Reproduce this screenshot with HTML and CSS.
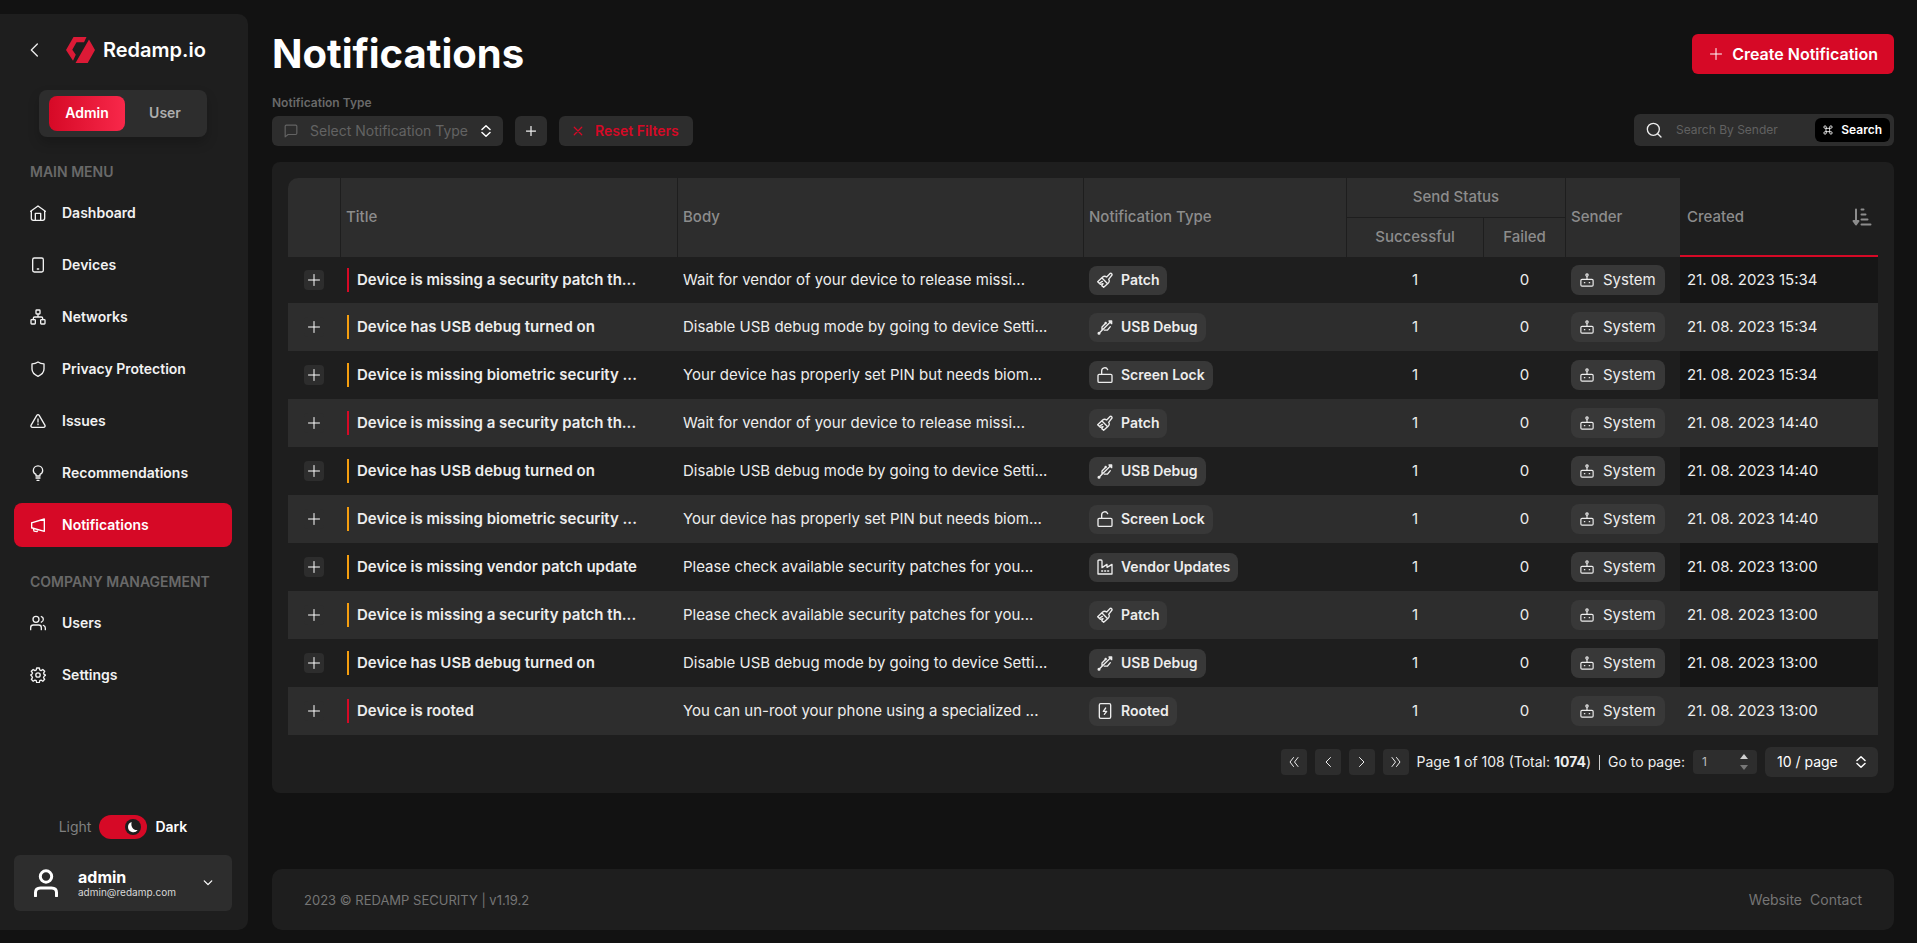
FILE: index.html
```html
<!DOCTYPE html>
<html lang="en">
<head>
<meta charset="utf-8">
<meta name="viewport" content="width=device-width, initial-scale=1">
<title>Notifications</title>
<link rel="stylesheet" href="styles.css">
</head>
<body>
<svg class="sprite" aria-hidden="true">
  <symbol id="i-home" viewBox="0 0 24 24"><path d="M1 9.500L12 1.500l11 8M2 9v11a3 3 0 0 0 3 3h14a3 3 0 0 0 3-3V9M8 23V12.500h8V23"/></symbol>
  <symbol id="i-device" viewBox="0 0 24 24"><rect x="4" y="1.500" width="16" height="21" rx="2.500"/><path d="M11 18h2"/></symbol>
  <symbol id="i-network" viewBox="0 0 24 24"><rect x="9" y="1.500" width="6" height="6" rx="1"/><rect x="1.500" y="16" width="6.500" height="6.500" rx="1"/><rect x="16" y="16" width="6.500" height="6.500" rx="1"/><path d="M5 16v-2a2 2 0 0 1 2-2h10a2 2 0 0 1 2 2v2M12 8v4"/></symbol>
  <symbol id="i-shield" viewBox="0 0 24 24"><path d="M12 1.500c2.500 1.700 5.500 2.700 9 2.800V12c0 5-3.500 8.500-9 11-5.500-2.500-9-6-9-11V4.300c3.500-.1 6.500-1.100 9-2.800z"/></symbol>
  <symbol id="i-warn" viewBox="0 0 24 24"><path d="M12 2.500c.8 0 1.400.4 1.800 1l8.500 14.700c.9 1.600-.1 3.300-1.800 3.300h-17c-1.700 0-2.700-1.700-1.800-3.300L10.200 3.500c.4-.6 1-1 1.800-1zM12 9v4.500M12 16.500v1"/></symbol>
  <symbol id="i-bulb" viewBox="0 0 24 24"><path d="M9 16.500v-2.300C6.800 13.200 5 11 5 8.300a7 7 0 0 1 14 0c0 2.700-1.800 4.900-4 5.900v2.300zM9 19.500h6M10.500 23h3"/></symbol>
  <symbol id="i-horn" viewBox="0 0 24 24"><path d="M21.500 3v18.500L3.500 16.500h-1v-8h1zM5 17l1 4.200 4.500.8 1.500-3"/></symbol>
  <symbol id="i-users" viewBox="0 0 24 24"><circle cx="9" cy="6.500" r="4.500"/><path d="M1 22v-3c0-2.500 1.800-4 4-4h8c2.200 0 4 1.500 4 4v3M17 2.300c3.500 1 4.500 6.500 0 8.500M20 15.500c2 .5 3 2 3 4V22"/></symbol>
  <symbol id="i-gear" viewBox="0 0 24 24"><circle cx="12" cy="12" r="3.300"/><path d="M10 1.500h4l.6 3 2 .9 2.600-1.700 2.800 2.800-1.700 2.600.9 2 2.300.9v.2l-2.300 1.700-.9 2 1.700 2.600-2.800 2.800-2.600-1.700-2 .9-.6 3h-4l-.6-3-2-.9-2.600 1.700L2 18.500l1.700-2.600-.9-2-1.600-1.700v-.4l1.600-.9.9-2L2 6.500l2.800-2.800 2.600 1.700 2-.9z"/></symbol>
  <symbol id="i-plus" viewBox="0 0 24 24"><path d="M12 1v22M1 12h22"/></symbol>
  <symbol id="i-x" viewBox="0 0 24 24"><path d="M3 3l18 18M21 3L3 21"/></symbol>
  <symbol id="i-left" viewBox="0 0 24 24"><path d="M17 3L8 12l9 9"/></symbol>
  <symbol id="i-right" viewBox="0 0 24 24"><path d="M7 3l9 9-9 9"/></symbol>
  <symbol id="i-first" viewBox="0 0 24 24"><path d="M11 3L4 12l7 9M20 3l-7 9 7 9"/></symbol>
  <symbol id="i-last" viewBox="0 0 24 24"><path d="M13 3l7 9-7 9M4 3l7 9-7 9"/></symbol>
  <symbol id="i-down" viewBox="0 0 24 24"><path d="M3 7l9 9 9-9"/></symbol>
  <symbol id="i-updown" viewBox="0 0 10 12"><path d="M1 4.500L5 .8l4 3.700M1 7.500l4 3.700 4-3.700"/></symbol>
  <symbol id="i-chat" viewBox="0 0 24 24"><path d="M2 22V4a2 2 0 0 1 2-2h16a2 2 0 0 1 2 2v12a2 2 0 0 1-2 2H7z"/></symbol>
  <symbol id="i-search" viewBox="0 0 24 24"><circle cx="11" cy="11" r="9"/><path d="M17.500 17.500L22.500 22.500"/></symbol>
  <symbol id="i-cmd" viewBox="0 0 24 24"><path d="M8 8h8v8H8zM8 8H5a3 3 0 1 1 3-3zM16 8V5a3 3 0 1 1 3 3zM16 16h3a3 3 0 1 1-3 3zM8 16v3a3 3 0 1 1-3-3z"/></symbol>
  <symbol id="i-sort" viewBox="0 0 20 18"><path d="M4 1.500v13M1.500 13L4 16.500 6.500 13zM9.500 1.500h2M9.500 6.500h4M9.500 11.500h6M9.500 16.500h9"/></symbol>
  <symbol id="i-patch" viewBox="0 0 24 24"><path d="M14.500 7.500L20 2a2 2 0 0 1 2.500 2.500L17.500 11c1.500 2 1 4-.8 5.800L10 23l-2.800-2.500L9 17.500l-4 1L1 14.500l7.500-7c2-1.700 4-1.500 6 0zM7.500 9l8.500 8.500M4 16.500l4-2.500"/></symbol>
  <symbol id="i-usb" viewBox="0 0 24 24"><path d="M3 21.500L20 4.500M7.500 16.500V12L13 6.500M11 16.800h4.500l4.500-5.300"/><circle cx="3" cy="21.500" r="1.300"/><circle cx="13" cy="6" r=".8"/><path d="M18 3h4v4z"/></symbol>
  <symbol id="i-lock" viewBox="0 0 24 24"><rect x="1.500" y="11" width="21" height="12" rx="1.800"/><path d="M7 11V6a4.700 4.700 0 0 1 9-2"/></symbol>
  <symbol id="i-factory" viewBox="0 0 24 24"><path d="M1.500 22.500V3A1.500 1.500 0 0 1 3 1.500h3A1.500 1.500 0 0 1 7.500 3v10L15 8v4.500L22.500 8v14.500zM7 18h1.500M11.500 18H13M16 18h1.500"/></symbol>
  <symbol id="i-rooted" viewBox="0 0 24 24"><rect x="3.500" y="1" width="17" height="22" rx="2"/><path d="M13 7.500l-3.500 5h5L11 17"/></symbol>
  <symbol id="i-bot" viewBox="0 0 24 24"><rect x="1.500" y="11" width="21" height="11.500" rx="2"/><circle cx="12" cy="3.500" r="2"/><path d="M12 5.500V11M7.500 16.500h.8M15.800 16.500h.8"/></symbol>
  <symbol id="i-user" viewBox="0 0 24 28"><circle cx="12" cy="7.500" r="5.700"/><path d="M1.500 27v-3.500C1.500 20.500 3.500 19 6.500 19h11c3 0 5 1.500 5 4.500V27"/></symbol>
</svg>

<div class="app">
  <aside class="sidebar">
    <div class="brand">
      <button class="back" type="button" aria-label="Collapse menu"><svg class="icon"><use href="#i-left"/></svg></button>
      <a class="logo" href="#">
        <svg viewBox="0 0 29 26" aria-hidden="true"><path d="M7.500 0h13L18 5.300h-7.500L6.300 12.800l3.500 5L7 23.800 0 13zM23 2.500L29 13l-7.300 13H9.500z"/></svg>
        <span>Redamp.io</span>
      </a>
    </div>
    <div class="role-switch">
      <button class="role role-active" type="button">Admin</button>
      <button class="role" type="button">User</button>
    </div>
    <nav class="nav">
      <h2 class="nav-title">MAIN MENU</h2>
      <a class="nav-item" href="#"><svg class="icon"><use href="#i-home"/></svg>Dashboard</a>
      <a class="nav-item" href="#"><svg class="icon"><use href="#i-device"/></svg>Devices</a>
      <a class="nav-item" href="#"><svg class="icon"><use href="#i-network"/></svg>Networks</a>
      <a class="nav-item" href="#"><svg class="icon"><use href="#i-shield"/></svg>Privacy Protection</a>
      <a class="nav-item" href="#"><svg class="icon"><use href="#i-warn"/></svg>Issues</a>
      <a class="nav-item" href="#"><svg class="icon"><use href="#i-bulb"/></svg>Recommendations</a>
      <a class="nav-item nav-current" href="#" aria-current="page"><svg class="icon"><use href="#i-horn"/></svg>Notifications</a>
      <h2 class="nav-title">COMPANY MANAGEMENT</h2>
      <a class="nav-item" href="#"><svg class="icon"><use href="#i-users"/></svg>Users</a>
      <a class="nav-item" href="#"><svg class="icon"><use href="#i-gear"/></svg>Settings</a>
    </nav>
    <div class="theme">
      <label for="theme">Light</label>
      <span class="switch">
        <input id="theme" type="checkbox" role="switch" checked>
        <svg class="moon" viewBox="0 0 24 24" aria-hidden="true"><circle cx="12" cy="12" r="12"/><path d="M10 4.500C6.500 5.500 4.500 8.500 4.500 12a8 8 0 0 0 14.500 4.500C13 17.500 8 12 10 4.500z"/></svg>
      </span>
      <label class="theme-on" for="theme">Dark</label>
    </div>
    <button class="account" type="button">
      <svg class="icon account-icon"><use href="#i-user"/></svg>
      <span class="account-text"><strong>admin</strong><small>admin@redamp.com</small></span>
      <svg class="icon account-arrow"><use href="#i-down"/></svg>
    </button>
  </aside>

  <main class="main">
    <header class="page-head">
      <h1>Notifications</h1>
      <button class="create" type="button"><svg class="icon"><use href="#i-plus"/></svg>Create Notification</button>
    </header>

    <div class="toolbar">
      <div class="filter">
        <label for="type">Notification Type</label>
        <div class="select-box type-box">
          <svg class="icon chat"><use href="#i-chat"/></svg>
          <select id="type"><option>Select Notification Type</option></select>
          <svg class="updown"><use href="#i-updown"/></svg>
        </div>
      </div>
      <button class="add" type="button" aria-label="Add filter"><svg class="icon"><use href="#i-plus"/></svg></button>
      <button class="reset" type="button"><svg class="icon"><use href="#i-x"/></svg>Reset Filters</button>
      <form class="search">
        <svg class="icon"><use href="#i-search"/></svg>
        <input type="text" placeholder="Search By Sender" aria-label="Search By Sender">
        <button type="button"><svg class="icon"><use href="#i-cmd"/></svg>Search</button>
      </form>
    </div>

    <section class="card">
      <table>
        <colgroup><col class="c-open"><col class="c-title"><col><col class="c-type"><col class="c-ok"><col class="c-fail"><col class="c-sender"><col class="c-date"></colgroup>
        <thead>
          <tr>
            <th rowspan="2" class="first"></th>
            <th rowspan="2">Title</th>
            <th rowspan="2">Body</th>
            <th rowspan="2">Notification Type</th>
            <th colspan="2" class="mid group">Send Status</th>
            <th rowspan="2" class="flat">Sender</th>
            <th rowspan="2" class="sorted"><div><span>Created</span><svg class="sort"><use href="#i-sort"/></svg></div></th>
          </tr>
          <tr><th class="mid">Successful</th><th class="mid">Failed</th></tr>
        </thead>
        <tbody>
          <tr><td class="mid"><button class="open" type="button" aria-label="Expand"><svg class="icon"><use href="#i-plus"/></svg></button></td><td><span class="title high">Device is missing a security patch th...</span></td><td>Wait for vendor of your device to release missi...</td><td><span class="tag"><svg class="icon"><use href="#i-patch"/></svg>Patch</span></td><td class="mid">1</td><td class="mid">0</td><td><span class="tag sender"><svg class="icon"><use href="#i-bot"/></svg>System</span></td><td class="date">21. 08. 2023 15:34</td></tr>
          <tr><td class="mid"><button class="open" type="button" aria-label="Expand"><svg class="icon"><use href="#i-plus"/></svg></button></td><td><span class="title">Device has USB debug turned on</span></td><td>Disable USB debug mode by going to device Setti...</td><td><span class="tag"><svg class="icon"><use href="#i-usb"/></svg>USB Debug</span></td><td class="mid">1</td><td class="mid">0</td><td><span class="tag sender"><svg class="icon"><use href="#i-bot"/></svg>System</span></td><td class="date">21. 08. 2023 15:34</td></tr>
          <tr><td class="mid"><button class="open" type="button" aria-label="Expand"><svg class="icon"><use href="#i-plus"/></svg></button></td><td><span class="title">Device is missing biometric security ...</span></td><td>Your device has properly set PIN but needs biom...</td><td><span class="tag"><svg class="icon"><use href="#i-lock"/></svg>Screen Lock</span></td><td class="mid">1</td><td class="mid">0</td><td><span class="tag sender"><svg class="icon"><use href="#i-bot"/></svg>System</span></td><td class="date">21. 08. 2023 15:34</td></tr>
          <tr><td class="mid"><button class="open" type="button" aria-label="Expand"><svg class="icon"><use href="#i-plus"/></svg></button></td><td><span class="title high">Device is missing a security patch th...</span></td><td>Wait for vendor of your device to release missi...</td><td><span class="tag"><svg class="icon"><use href="#i-patch"/></svg>Patch</span></td><td class="mid">1</td><td class="mid">0</td><td><span class="tag sender"><svg class="icon"><use href="#i-bot"/></svg>System</span></td><td class="date">21. 08. 2023 14:40</td></tr>
          <tr><td class="mid"><button class="open" type="button" aria-label="Expand"><svg class="icon"><use href="#i-plus"/></svg></button></td><td><span class="title">Device has USB debug turned on</span></td><td>Disable USB debug mode by going to device Setti...</td><td><span class="tag"><svg class="icon"><use href="#i-usb"/></svg>USB Debug</span></td><td class="mid">1</td><td class="mid">0</td><td><span class="tag sender"><svg class="icon"><use href="#i-bot"/></svg>System</span></td><td class="date">21. 08. 2023 14:40</td></tr>
          <tr><td class="mid"><button class="open" type="button" aria-label="Expand"><svg class="icon"><use href="#i-plus"/></svg></button></td><td><span class="title">Device is missing biometric security ...</span></td><td>Your device has properly set PIN but needs biom...</td><td><span class="tag"><svg class="icon"><use href="#i-lock"/></svg>Screen Lock</span></td><td class="mid">1</td><td class="mid">0</td><td><span class="tag sender"><svg class="icon"><use href="#i-bot"/></svg>System</span></td><td class="date">21. 08. 2023 14:40</td></tr>
          <tr><td class="mid"><button class="open" type="button" aria-label="Expand"><svg class="icon"><use href="#i-plus"/></svg></button></td><td><span class="title">Device is missing vendor patch update</span></td><td>Please check available security patches for you...</td><td><span class="tag"><svg class="icon"><use href="#i-factory"/></svg>Vendor Updates</span></td><td class="mid">1</td><td class="mid">0</td><td><span class="tag sender"><svg class="icon"><use href="#i-bot"/></svg>System</span></td><td class="date">21. 08. 2023 13:00</td></tr>
          <tr><td class="mid"><button class="open" type="button" aria-label="Expand"><svg class="icon"><use href="#i-plus"/></svg></button></td><td><span class="title">Device is missing a security patch th...</span></td><td>Please check available security patches for you...</td><td><span class="tag"><svg class="icon"><use href="#i-patch"/></svg>Patch</span></td><td class="mid">1</td><td class="mid">0</td><td><span class="tag sender"><svg class="icon"><use href="#i-bot"/></svg>System</span></td><td class="date">21. 08. 2023 13:00</td></tr>
          <tr><td class="mid"><button class="open" type="button" aria-label="Expand"><svg class="icon"><use href="#i-plus"/></svg></button></td><td><span class="title">Device has USB debug turned on</span></td><td>Disable USB debug mode by going to device Setti...</td><td><span class="tag"><svg class="icon"><use href="#i-usb"/></svg>USB Debug</span></td><td class="mid">1</td><td class="mid">0</td><td><span class="tag sender"><svg class="icon"><use href="#i-bot"/></svg>System</span></td><td class="date">21. 08. 2023 13:00</td></tr>
          <tr><td class="mid"><button class="open" type="button" aria-label="Expand"><svg class="icon"><use href="#i-plus"/></svg></button></td><td><span class="title high">Device is rooted</span></td><td>You can un-root your phone using a specialized ...</td><td><span class="tag"><svg class="icon"><use href="#i-rooted"/></svg>Rooted</span></td><td class="mid">1</td><td class="mid">0</td><td><span class="tag sender"><svg class="icon"><use href="#i-bot"/></svg>System</span></td><td class="date">21. 08. 2023 13:00</td></tr>
        </tbody>
      </table>
      <div class="pager">
        <button type="button" aria-label="First page"><svg class="icon"><use href="#i-first"/></svg></button>
        <button type="button" aria-label="Previous page"><svg class="icon"><use href="#i-left"/></svg></button>
        <button type="button" aria-label="Next page"><svg class="icon"><use href="#i-right"/></svg></button>
        <button type="button" aria-label="Last page"><svg class="icon"><use href="#i-last"/></svg></button>
        <span class="pager-info">Page <b>1</b> of 108 (Total: <b>1074</b>)</span>
        <span class="pager-rule"></span>
        <label for="goto">Go to page:</label>
        <div class="goto">
          <input id="goto" type="number" value="1" min="1">
          <svg viewBox="0 0 8 16" aria-hidden="true"><path d="M0 5l4-5 4 5z"/><path class="dim" d="M0 11l4 5 4-5z"/></svg>
        </div>
        <div class="select-box size-box">
          <select aria-label="Rows per page"><option>10 / page</option></select>
          <svg class="updown"><use href="#i-updown"/></svg>
        </div>
      </div>
    </section>

    <footer class="footer">
      <span class="copyright">2023 © REDAMP SECURITY | v1.19.2</span>
      <nav><a href="#">Website</a><a href="#">Contact</a></nav>
    </footer>
  </main>
</div>
</body>
</html>
```
FILE: styles.css
```css
:root {
  --bg: #121212;
  --panel: #1e1e1e;
  --box: #2d2d2d;
  --tag: #383838;
  --red: #d60926;
  --muted: #696969;
}
* { box-sizing: border-box; }
body {
  margin: 0;
  background: var(--bg);
  color: #ededed;
  font-family: Inter, Roboto, sans-serif;
  font-size: 15px;
  line-height: 20px;
}
button, input, select {
  font: inherit;
  color: inherit;
  border: 0;
  padding: 0;
  background: none;
}
select { appearance: none; outline: 0; min-width: 0; opacity: 1; }
a { color: inherit; text-decoration: none; }
.sprite { position: absolute; width: 0; height: 0; }
.icon, .updown, .sort {
  flex: none;
  width: 16px;
  height: 16px;
  fill: none;
  stroke: currentColor;
  stroke-width: 2;
  stroke-linejoin: round;
  stroke-linecap: round;
}
.app {
  display: flex;
  gap: 24px;
  min-height: 100vh;
  padding: 14px 23px 13px 0;
}

/* Sidebar */
.sidebar {
  display: flex;
  flex-direction: column;
  flex: none;
  width: 248px;
  padding: 16px 16px 19px 14px;
  background: var(--panel);
  border-radius: 0 10px 10px 0;
}
.brand { display: flex; align-items: center; height: 40px; gap: 26px; }
.back { display: flex; margin-left: 14px; width: 12px; justify-content: center; }
.logo { display: flex; align-items: center; gap: 8px; color: #fff; font-size: 20px; font-weight: 600; }
.logo svg { width: 29px; height: 26px; fill: #dc1a36; }
.role-switch {
  display: flex;
  align-self: flex-start;
  gap: 2px;
  margin: 20px 0 0 25px;
  width: 168px;
  height: 47px;
  padding: 6px 4px 6px 10px;
  background: var(--box);
  border-radius: 8px;
  box-shadow: 0 6px 12px #0003;
}
.role { flex: 1; padding-bottom: 2px; border-radius: 8px; color: #adadad; font-size: 14px; font-weight: 600; }
.role-active { color: #fff; background: linear-gradient(90deg, #d60926, #f8284a); }
.nav { display: flex; flex-direction: column; gap: 8px; padding-top: 24px; }
.nav-title {
  margin: 0;
  padding: 0 16px;
  color: var(--muted);
  font-size: 14px;
  line-height: 22px;
  font-weight: 600;
}
.nav-current + .nav-title { padding-top: 16px; }
.nav-item {
  display: flex;
  align-items: center;
  gap: 16px;
  height: 44px;
  padding: 0 16px;
  color: #f2f2f2;
  border-radius: 8px;
  font-size: 14px;
  font-weight: 600;
}
.nav-current { color: #fff; background: var(--red); }
.theme {
  display: flex;
  justify-content: center;
  align-items: center;
  gap: 8px;
  margin-top: auto;
  height: 24px;
  color: #808080;
  font-size: 14px;
}
.theme-on { color: #fff; font-weight: 600; }
.switch { position: relative; display: flex; }
.switch input {
  appearance: none;
  width: 48px;
  height: 24px;
  margin: 0;
  background: var(--red);
  border-radius: 12px;
}
.moon { position: absolute; right: 6px; top: 4px; width: 16px; height: 16px; fill: var(--panel); pointer-events: none; }
.moon path { fill: #fff; }
.account {
  display: flex;
  align-items: center;
  gap: 20px;
  margin-top: 16px;
  height: 56px;
  padding: 0 19px 0 20px;
  background: var(--box);
  border-radius: 6px;
  text-align: left;
  color: #fff;
}
.account-icon { width: 24px; height: 28px; stroke-width: 3; }
.account-text { display: flex; flex-direction: column; flex: 1; }
.account strong { font-size: 16px; line-height: 18px; }
.account small { font-size: 10px; line-height: 12px; color: #d8d8d8; }
.account-arrow { width: 10px; height: 10px; stroke-width: 3; }

/* Page head and toolbar */
.main { display: flex; flex-direction: column; flex: 1; min-width: 0; padding-top: 20px; }
.page-head { display: flex; align-items: center; justify-content: space-between; }
h1 { margin: 0; color: #fff; font-size: 40px; line-height: 40px; font-weight: 700; }
.create {
  display: flex;
  align-items: center;
  gap: 10px;
  height: 40px;
  padding: 0 16px 0 18px;
  background: var(--red);
  border-radius: 6px;
  color: #fff;
  font-size: 16px;
  font-weight: 600;
}
.create .icon { width: 12px; height: 12px; }
.toolbar { display: flex; align-items: flex-end; gap: 12px; margin-top: 22px; }
.filter label { display: block; margin-bottom: 6px; color: var(--muted); font-size: 12px; line-height: 14px; font-weight: 600; }
.select-box { display: flex; align-items: center; height: 30px; background: var(--box); border-radius: 6px; }
.select-box select { flex: 1; }
.updown { width: 10px; height: 12px; stroke: #fff; stroke-width: 1.5; pointer-events: none; }
.type-box { width: 231px; padding: 0 12px; color: #636363; font-size: 14px; }
.type-box select { margin-left: 12px; }
.chat { width: 14px; height: 14px; }
.add, .reset { display: flex; align-items: center; justify-content: center; height: 30px; background: var(--box); border-radius: 6px; }
.add { width: 32px; }
.add .icon, .reset .icon { width: 10px; height: 10px; stroke-width: 3; }
.reset { gap: 12px; padding: 0 14px; color: var(--red); font-size: 14px; font-weight: 600; }
.search {
  display: flex;
  align-items: center;
  width: 260px;
  height: 32px;
  margin-left: auto;
  padding: 0 4px 0 12px;
  background: var(--box);
  border-radius: 6px;
  font-size: 12px;
}
.search input { flex: 1; min-width: 0; margin-left: 14px; }
.search input::placeholder { color: #616161; opacity: 1; }
.search button {
  display: flex;
  align-items: center;
  gap: 8px;
  height: 24px;
  padding: 0 8px;
  background: #000;
  border-radius: 6px;
  color: #fff;
  font-size: 12px;
  font-weight: 600;
}
.search button .icon { width: 10px; height: 10px; }

/* Table */
.card { margin-top: 16px; padding: 16px; background: var(--panel); border-radius: 8px; }
table { width: 100%; table-layout: fixed; border-collapse: separate; border-spacing: 0; }
.c-open { width: 53px; }
.c-title { width: 337px; }
.c-type { width: 263px; }
.c-ok { width: 137px; }
.c-fail { width: 82px; }
.c-sender { width: 114px; }
.c-date { width: 198px; }
th {
  height: 39px;
  padding: 0 5px 2px;
  background: var(--box);
  border-right: 1px solid var(--panel);
  color: #8c8c8c;
  text-align: left;
  font-size: 15px;
  font-weight: 500;
}
.group { height: 40px; border-bottom: 1px solid var(--panel); }
.flat { border-right: 0; }
.first { border-top-left-radius: 10px; }
.sorted { padding: 0 6px 0 7px; border-right: 0; border-bottom: 2px solid var(--red); background: var(--panel); }
.sorted div { display: flex; align-items: center; justify-content: space-between; }
.sort { width: 20px; height: 18px; }
td { height: 48px; padding: 0 5px; border-right: 1px solid transparent; white-space: nowrap; }
tbody tr:first-child td { height: 46px; }
tbody tr:nth-child(even) td { background: var(--box); }
tbody tr:nth-child(odd) .date { background: #161616; }
td.date { padding-left: 7px; }
.mid { text-align: center; }
td.mid:first-child { padding: 0; }
.open {
  display: inline-flex;
  align-items: center;
  justify-content: center;
  width: 20px;
  height: 20px;
  background: var(--box);
  border-radius: 4px;
  vertical-align: middle;
}
.open .icon { width: 12px; height: 12px; stroke: #fff; }
.title { display: inline-block; margin-left: 1px; padding-left: 8px; border-left: 2px solid #f59e0f; line-height: 24px; font-weight: 600; }
.high { border-color: var(--red); }
.tag {
  display: inline-flex;
  align-items: center;
  gap: 8px;
  height: 29px;
  padding: 0 8px;
  background: var(--tag);
  border-radius: 8px;
  font-size: 14px;
  font-weight: 600;
  vertical-align: middle;
}
.sender { height: 30px; gap: 9px; padding: 0 9px; font-size: 15px; font-weight: 400; }
.sender .icon { width: 14px; height: 14px; }

/* Pager */
.pager { display: flex; align-items: center; justify-content: flex-end; gap: 8px; margin-top: 12px; font-size: 14px; }
.pager button {
  display: flex;
  align-items: center;
  justify-content: center;
  width: 26px;
  height: 26px;
  background: var(--box);
  border-radius: 4px;
}
.pager button .icon { width: 12px; height: 12px; }
.pager-rule { width: 1px; height: 15px; background: #ccc; }
.goto { display: flex; align-items: center; width: 64px; height: 24px; padding: 0 9px; background: var(--box); border-radius: 4px; color: #bdbdbd; font-size: 12px; }
.goto input { flex: 1; min-width: 0; appearance: textfield; }
.goto input::-webkit-inner-spin-button { appearance: none; margin: 0; }
.goto svg { width: 8px; height: 16px; fill: #d0d0d0; }
.goto .dim { fill: #777; }
.size-box { width: 113px; padding: 0 12px; color: #fff; }

/* Footer */
.footer {
  display: flex;
  align-items: center;
  justify-content: space-between;
  height: 61px;
  margin-top: auto;
  padding: 0 32px;
  background: var(--panel);
  border-radius: 10px;
  color: #757575;
  font-size: 14px;
}
.copyright { font-size: 13px; }
.footer nav { display: flex; gap: 8px; }
```
